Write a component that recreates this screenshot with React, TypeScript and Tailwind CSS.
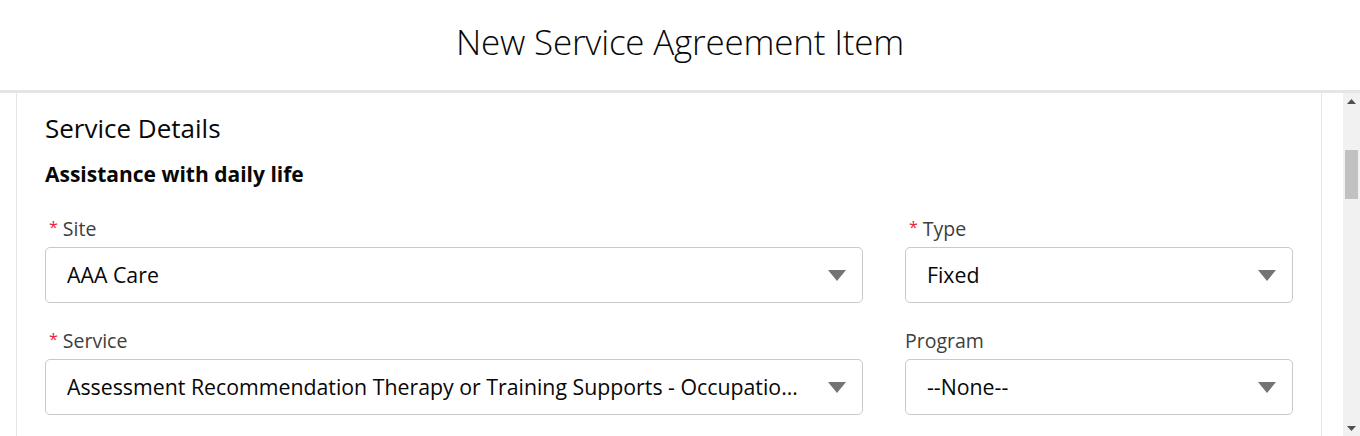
const font = "font-['Segoe_UI','Open_Sans','Noto_Sans',sans-serif]";

const Caret = () => (
  <svg width="18" height="11" viewBox="0 0 18 11" className="shrink-0">
    <path d="M0 0 H18 L9 11 Z" fill="#747474" />
  </svg>
);

type TFieldProps = {
  label: string;
  value: string;
  required?: boolean;
};

const Field = ({ label, value, required }: TFieldProps) => (
  <div className="flex flex-col">
    <label className="flex items-center h-[26px] text-[19.5px] text-[#3e3e3c] leading-none">
      {required && <span className="ml-[4px] mr-[5px] -mt-[4px] text-[16px] text-[#e3262f]">*</span>}
      {label}
    </label>
    <div className="mt-[5px] flex items-center h-[56px] rounded-[5px] border border-[#c9c9c9] bg-white pl-[21px] pr-[16px]">
      <span className="flex-1 truncate text-[21.3px] text-[#080707]">{value}</span>
      <span className="ml-[20px]"><Caret /></span>
    </div>
  </div>
);

export default function App() {
  return (
    <div className={`h-[436px] w-[1360px] overflow-hidden bg-white ${font}`}>
      <header className="flex h-[93px] items-center justify-center border-b-[3px] border-[#e5e5e5] pb-[6px]">
        <h1 className="text-[35px] font-light text-[#080707] tracking-[-0.2px]">New Service Agreement Item</h1>
      </header>
      <div className="flex h-[343px]">
        <div className="w-[16px]" />
        <div className="w-[1306px] border-x border-[#e5e5e5] pl-[28px] pt-[16px]">
          <h2 className="text-[26px] text-[#080707] leading-[38px]">Service Details</h2>
          <h3 className="mt-[13px] text-[21px] font-bold text-[#080707] leading-[28px]">Assistance with daily life</h3>
          <div className="mt-[28px] grid grid-cols-[818px_388px] gap-x-[42px] gap-y-[25px]">
            <Field label="Site" value="AAA Care" required />
            <Field label="Type" value="Fixed" required />
            <Field label="Service" value="Assessment Recommendation Therapy or Training Supports - Occupational Therapy" required />
            <Field label="Program" value="--None--" />
          </div>
        </div>
        <div className="w-[21px]" />
        <div className="flex w-[17px] flex-col items-center bg-[#f1f1f1]">
          <svg width="9" height="5" viewBox="0 0 9 5" className="mt-[6px]">
            <path d="M0 5 L4.5 0 L9 5 Z" fill="#505050" />
          </svg>
          <div className="mt-[46px] h-[49px] w-[13px] bg-[#c1c1c1]" />
          <div className="flex-1" />
          <svg width="9" height="5" viewBox="0 0 9 5" className="mb-[5px]">
            <path d="M0 0 L9 0 L4.5 5 Z" fill="#505050" />
          </svg>
        </div>
      </div>
    </div>
  );
}
